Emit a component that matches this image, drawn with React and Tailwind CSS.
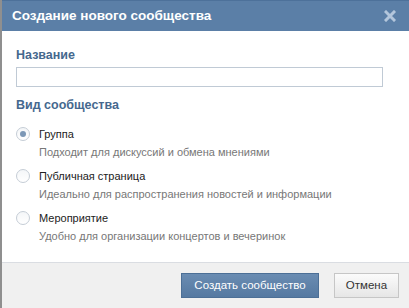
import { useState } from 'react';

const TYPES = [
  { id: 'group', title: 'Группа', desc: 'Подходит для дискуссий и обмена мнениями' },
  { id: 'public', title: 'Публичная страница', desc: 'Идеально для распространения новостей и информации' },
  { id: 'event', title: 'Мероприятие', desc: 'Удобно для организации концертов и вечеринок' },
];

function Radio({ checked }) {
  return (
    <span className="flex h-[14px] w-[14px] shrink-0 items-center justify-center rounded-full border border-[#c5cdd6] bg-gradient-to-b from-[#f4f6f8] to-white">
      {checked && <span className="h-[6px] w-[6px] rounded-full bg-[#7c97b6]" />}
    </span>
  );
}

export default function App() {
  const [type, setType] = useState('group');

  return (
    <div className="flex h-[308px] w-[409px] flex-col overflow-hidden border-l-2 border-[#8f8f8f] bg-white font-['Liberation_Sans',Arial,sans-serif]">
      {/* Header */}
      <div className="flex h-[31px] shrink-0 items-center justify-between border-t border-[#4d719a] bg-[#5b7fa7] pl-[10px] pr-[13px]">
        <span className="text-[13.5px] font-bold text-white">Создание нового сообщества</span>
        <svg width="12" height="12" viewBox="0 0 12 12" className="text-[#b3c6dc]">
          <path d="M2 2 L10 10 M10 2 L2 10" stroke="currentColor" strokeWidth="3" strokeLinecap="square" />
        </svg>
      </div>

      {/* Body */}
      <div className="flex flex-1 flex-col px-[14px] pt-[16px]">
        <div className="text-[12.5px] font-bold leading-[16px] text-[#45688e]">Название</div>
        <input className="mt-[4px] h-[20px] w-[367px] border border-[#c0cad5] bg-white outline-none" />
        <div className="mt-[10px] text-[12.5px] font-bold leading-[16px] text-[#45688e]">Вид сообщества</div>

        <div className="mt-[12px] flex flex-col gap-[6px]">
          {TYPES.map((t) => (
            <label key={t.id} className="flex cursor-pointer items-start gap-[9px]" onClick={() => setType(t.id)}>
              <span className="pt-[2px]">
                <Radio checked={type === t.id} />
              </span>
              <span className="flex flex-col">
                <span className="text-[11px] leading-[18px] text-[#222]">{t.title}</span>
                <span className="text-[11px] leading-[18px] text-[#777]">{t.desc}</span>
              </span>
            </label>
          ))}
        </div>
      </div>

      {/* Footer */}
      <div className="flex h-[46px] shrink-0 items-center justify-end gap-[15px] border-t border-[#dadde2] bg-[#f0f0f0] pr-[10px]">
        <button className="h-[25px] w-[138px] border border-[#4c6f96] bg-gradient-to-b from-[#6a8cb2] to-[#5579a1] text-[11.5px] text-white">
          Создать сообщество
        </button>
        <button className="h-[25px] w-[65px] border border-[#c6c6c6] bg-gradient-to-b from-[#fbfbfb] to-[#e6e6e6] text-[11.5px] text-[#333]">
          Отмена
        </button>
      </div>
    </div>
  );
}
